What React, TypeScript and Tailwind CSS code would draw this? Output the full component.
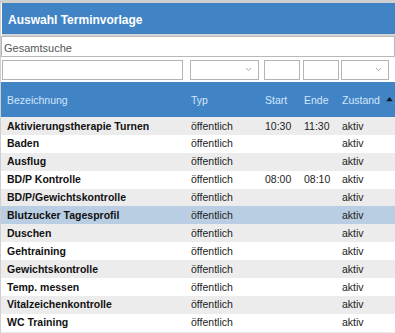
import { ChevronDown } from "lucide-react"

const rows = [
  { name: "Aktivierungstherapie Turnen", typ: "öffentlich", start: "10:30", ende: "11:30", zustand: "aktiv" },
  { name: "Baden", typ: "öffentlich", start: "", ende: "", zustand: "aktiv" },
  { name: "Ausflug", typ: "öffentlich", start: "", ende: "", zustand: "aktiv" },
  { name: "BD/P Kontrolle", typ: "öffentlich", start: "08:00", ende: "08:10", zustand: "aktiv" },
  { name: "BD/P/Gewichtskontrolle", typ: "öffentlich", start: "", ende: "", zustand: "aktiv" },
  { name: "Blutzucker Tagesprofil", typ: "öffentlich", start: "", ende: "", zustand: "aktiv" },
  { name: "Duschen", typ: "öffentlich", start: "", ende: "", zustand: "aktiv" },
  { name: "Gehtraining", typ: "öffentlich", start: "", ende: "", zustand: "aktiv" },
  { name: "Gewichtskontrolle", typ: "öffentlich", start: "", ende: "", zustand: "aktiv" },
  { name: "Temp. messen", typ: "öffentlich", start: "", ende: "", zustand: "aktiv" },
  { name: "Vitalzeichenkontrolle", typ: "öffentlich", start: "", ende: "", zustand: "aktiv" },
  { name: "WC Training", typ: "öffentlich", start: "", ende: "", zustand: "aktiv" },
]

function Select({ className }: { className: string }) {
  return (
    <div className={`h-[20px] border border-[#b4b4b4] bg-white flex items-center justify-end pr-[5px] ${className}`}>
      <ChevronDown size={9} strokeWidth={2} className="text-[#8a8a8a]" />
    </div>
  )
}

export default function App() {
  return (
    <div className="w-[395px] h-[333px] overflow-hidden bg-white font-['Liberation_Sans',Arial,sans-serif] border-t-[3px] border-l border-[#cfcfcf]">
      {/* Title */}
      <div className="h-[33px] ml-[1px] bg-[#4184c6] flex items-center pl-[6px] pt-[2px] text-white font-bold text-[12px] border-b-2 border-[#d4d4d4]">
        Auswahl Terminvorlage
      </div>

      {/* Search */}
      <div className="h-[21px] border border-[#b8b8b8] flex items-center pl-[2px] pt-[3px] text-[11px] text-[#555]">
        Gesamtsuche
      </div>

      {/* Filters */}
      <div className="flex h-[25px] items-center pl-[1px]">
        <div className="h-[20px] w-[181px] border border-[#b4b4b4] bg-white" />
        <Select className="ml-[7px] w-[69px]" />
        <div className="ml-[5px] h-[20px] w-[36px] border border-[#b4b4b4] bg-white" />
        <div className="ml-[3px] h-[20px] w-[36px] border border-[#b4b4b4] bg-white" />
        <Select className="ml-[2px] w-[48px]" />
      </div>

      {/* Header */}
      <div className="h-[35px] bg-[#4184c6] flex items-center pt-[2px] text-[10.5px] text-[#d3e6fb]">
        <div className="w-[190px] pl-[6px]">Bezeichnung</div>
        <div className="w-[74px]">Typ</div>
        <div className="w-[39px]">Start</div>
        <div className="w-[38px]">Ende</div>
        <div className="flex-1 flex items-center">
          <span>Zustand</span>
          <svg width="7" height="5" viewBox="0 0 8 6" className="ml-[6px] mb-[3px]">
            <path d="M0 5 L4 0 L8 5 Z" fill="#0d1a2e" />
          </svg>
        </div>
      </div>

      {/* Rows */}
      {rows.map((r, i) => (
        <div
          key={r.name}
          className={`h-[17.9px] flex items-center pt-[1px] text-[10.5px] text-[#111] ${
            i === 5 ? "bg-[#b9cee2]" : i % 2 === 0 ? "bg-[#ececec]" : "bg-white"
          }`}
        >
          <div className="w-[190px] pl-[6px] font-bold">{r.name}</div>
          <div className="w-[74px] text-[#222]">{r.typ}</div>
          <div className="w-[39px] text-[#222]">{r.start}</div>
          <div className="w-[38px] text-[#222]">{r.ende}</div>
          <div className="flex-1 text-[#222]">{r.zustand}</div>
        </div>
      ))}
      <div className="h-[18px] bg-[#ececec]" />
    </div>
  )
}
